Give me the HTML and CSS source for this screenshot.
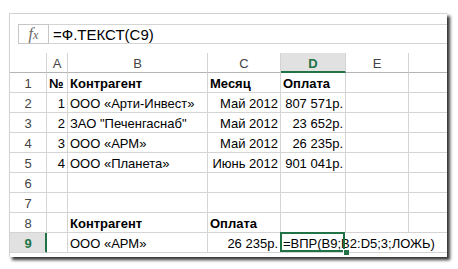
FILE: index.html
```html
<!DOCTYPE html>
<html lang="ru">
<head>
    <meta charset="UTF-8">
    <title>ВПР</title>
    <link rel="stylesheet" href="styles.css">
</head>
<body>
    <div class="window">
        <div class="formula-bar">
            <div class="fx">f<span>x</span></div>
            <div class="formula">=Ф.ТЕКСТ(С9)</div>
        </div>
        <div class="sheet">
            <div class="colhead corner"></div>
            <div class="colhead">A</div>
            <div class="colhead">B</div>
            <div class="colhead">C</div>
            <div class="colhead active">D</div>
            <div class="colhead">E</div>
            <div class="colhead last"></div>

            <div class="rowhead">1</div>
            <div class="cell bold">№</div>
            <div class="cell bold">Контрагент</div>
            <div class="cell bold">Месяц</div>
            <div class="cell bold">Оплата</div>
            <div class="cell"></div>
            <div class="cell last"></div>

            <div class="rowhead">2</div>
            <div class="cell num">1</div>
            <div class="cell">ООО «Арти-Инвест»</div>
            <div class="cell num">Май 2012</div>
            <div class="cell num">807 571р.</div>
            <div class="cell"></div>
            <div class="cell last"></div>

            <div class="rowhead">3</div>
            <div class="cell num">2</div>
            <div class="cell">ЗАО "Печенгаснаб"</div>
            <div class="cell num">Май 2012</div>
            <div class="cell num">23 652р.</div>
            <div class="cell"></div>
            <div class="cell last"></div>

            <div class="rowhead">4</div>
            <div class="cell num">3</div>
            <div class="cell">ООО «АРМ»</div>
            <div class="cell num">Май 2012</div>
            <div class="cell num">26 235р.</div>
            <div class="cell"></div>
            <div class="cell last"></div>

            <div class="rowhead">5</div>
            <div class="cell num">4</div>
            <div class="cell">ООО «Планета»</div>
            <div class="cell num">Июнь 2012</div>
            <div class="cell num">901 041р.</div>
            <div class="cell"></div>
            <div class="cell last"></div>

            <div class="rowhead">6</div>
            <div class="cell"></div>
            <div class="cell"></div>
            <div class="cell"></div>
            <div class="cell"></div>
            <div class="cell"></div>
            <div class="cell last"></div>

            <div class="rowhead">7</div>
            <div class="cell"></div>
            <div class="cell"></div>
            <div class="cell"></div>
            <div class="cell"></div>
            <div class="cell"></div>
            <div class="cell last"></div>

            <div class="rowhead">8</div>
            <div class="cell"></div>
            <div class="cell bold">Контрагент</div>
            <div class="cell bold">Оплата</div>
            <div class="cell"></div>
            <div class="cell"></div>
            <div class="cell last"></div>

            <div class="rowhead active">9</div>
            <div class="cell"></div>
            <div class="cell">ООО «АРМ»</div>
            <div class="cell num">26 235р.</div>
            <div class="cell spill selected">=ВПР(B9;B2:D5;3;ЛОЖЬ)</div>
            <div class="cell spill"></div>
            <div class="cell last"></div>
        </div>
    </div>
</body>
</html>
```

FILE: styles.css
```css
html, body {
    margin: 0;
    background-color: #fff;
}

body {
    width: 458px;
    height: 269px;
    overflow: hidden;
    font-family: "Liberation Sans", Arial, sans-serif;
    font-size: 13px;
    color: #000;
}

.window {
    box-sizing: border-box;
    margin: 13px 0 0 9px;
    width: 438px;
    height: 244px;
    border-top: 1px solid #d2d2d2;
    border-left: 1px solid #d2d2d2;
    box-shadow: 3px 3px 3px rgba(0, 0, 0, 0.8);
    background-color: #fff;
    overflow: hidden;
}

/* formula bar */
.formula-bar {
    display: flex;
    margin: 10px 0 0 8px;
    height: 20px;
}

.fx {
    box-sizing: border-box;
    width: 31px;
    height: 20px;
    border: 1px solid #c6c6c6;
    text-align: center;
    font-family: "Liberation Serif", serif;
    font-style: italic;
    font-size: 16px;
    line-height: 17px;
    color: #666;
}

.fx span {
    font-size: 12px;
}

.formula {
    flex: 1;
    box-sizing: border-box;
    height: 20px;
    border-top: 1px solid #d4d4d4;
    border-bottom: 1px solid #d4d4d4;
    padding-left: 4px;
    font-size: 15px;
    line-height: 19px;
}

/* sheet grid */
.sheet {
    display: grid;
    grid-template-columns: 37px 21px 140px 73px 65px 63px 1fr;
    grid-auto-rows: 20px;
    margin-top: 9px;
}

.sheet > div {
    box-sizing: border-box;
    border-right: 1px solid #d4d4d4;
    border-bottom: 1px solid #d4d4d4;
    white-space: nowrap;
    line-height: 17px;
    padding-top: 2px;
}

.colhead {
    text-align: center;
    color: #444;
}

.sheet > .colhead {
    border-bottom-color: #b5b5b5;
}

.colhead.active {
    background-color: #e1e1e1;
    color: #217346;
    font-weight: bold;
    border-bottom: 2px solid #217346;
}

.rowhead {
    text-align: center;
    color: #444;
}

.rowhead.active {
    background-color: #e1e1e1;
    color: #217346;
    font-weight: bold;
    box-shadow: inset -1px 0 0 #217346;
}

.sheet > .rowhead.active {
    border-right-color: #217346;
}

.sheet > .last {
    border-right: none;
}

.cell {
    padding: 0 2px;
}

.bold {
    font-weight: bold;
}

.num {
    text-align: right;
}

.sheet > .spill {
    border-right-color: transparent;
}

.selected {
    position: relative;
    overflow: visible;
}

.selected::after {
    content: "";
    position: absolute;
    left: -1px;
    top: -1px;
    right: 0;
    bottom: 0;
    border: 2px solid #217346;
}

.selected::before {
    content: "";
    position: absolute;
    right: -4px;
    bottom: -3px;
    width: 5px;
    height: 5px;
    background-color: #217346;
    border: 1px solid #fff;
    border-width: 1px 0 0 1px;
    z-index: 1;
}
```
